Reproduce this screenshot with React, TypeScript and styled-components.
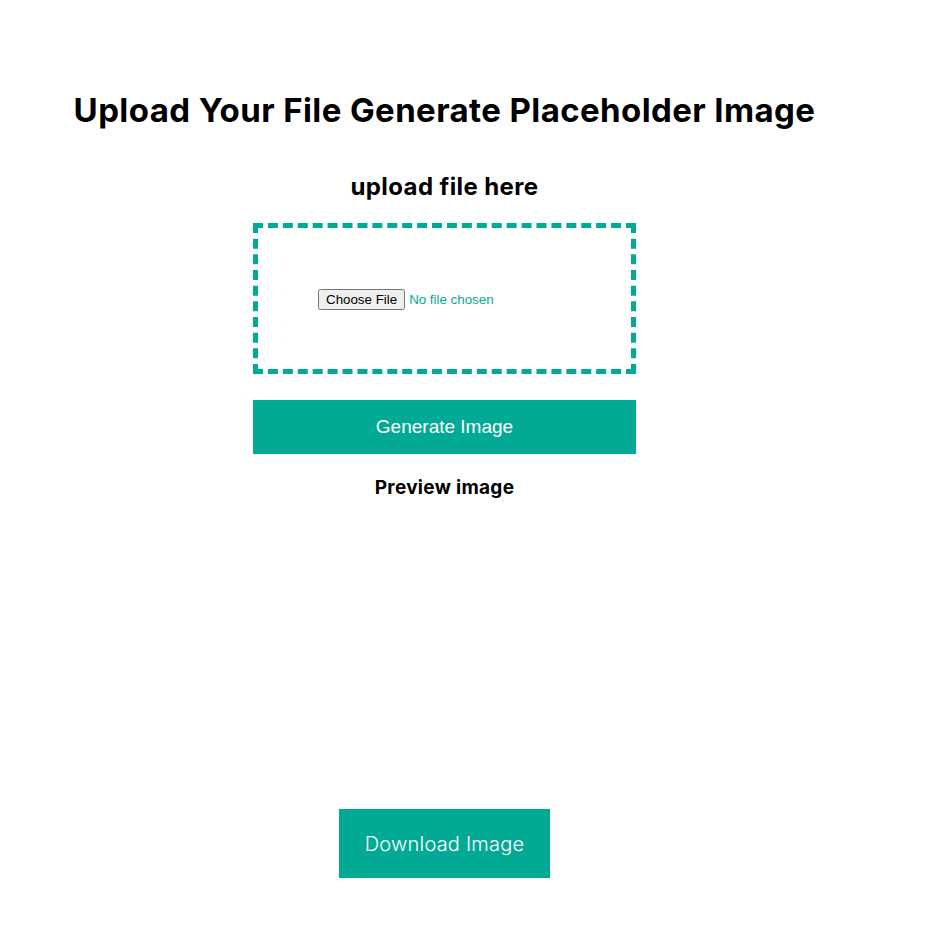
import React from "react";
import styled, { createGlobalStyle } from "styled-components";

const TEAL = "#02aa96";

const GlobalStyle = createGlobalStyle`
	body {
		margin: 0;
		background: #ffffff;
		font-family: Inter, "Liberation Sans", sans-serif;
		color: #000000;
	}
`;

const Page = styled.div`
	width: 889px;
	display: flex;
	flex-direction: column;
	align-items: center;
	padding-top: 88px;
`;

const Title = styled.h1`
	margin: 0;
	font-size: 33px;
	font-weight: 700;
	letter-spacing: 0.4px;
	line-height: 44px;
`;

const SubTitle = styled.h3`
	margin: 38px 0 0;
	font-size: 24px;
	font-weight: 700;
	letter-spacing: 0.4px;
	line-height: 34px;
`;

const DropZone = styled.div`
	margin-top: 19px;
	width: 383px;
	height: 151px;
	box-sizing: border-box;
	border: 5px dashed ${TEAL};
	display: flex;
	align-items: center;
	padding: 2px 0 0 60px;
`;

const FileInput = styled.input`
	color: ${TEAL};
	font-family: "Liberation Sans", Arial, sans-serif;
	font-size: 13.33px;
`;

const GenerateButton = styled.button`
	margin-top: 26px;
	width: 383px;
	height: 54px;
	border: none;
	background: ${TEAL};
	color: #ffffff;
	font-family: "Liberation Sans", Arial, sans-serif;
	font-size: 19px;
	cursor: pointer;
`;

const PreviewLabel = styled.h4`
	margin: 20px 0 0;
	font-size: 19px;
	font-weight: 700;
	letter-spacing: 0.3px;
	line-height: 28px;
`;

const PreviewArea = styled.div`
	width: 383px;
	height: 307px;
`;

const DownloadButton = styled.button`
	width: 211px;
	height: 69px;
	border: none;
	background: ${TEAL};
	color: #ffffff;
	font-family: Inter, "Liberation Sans", sans-serif;
	font-size: 20px;
	font-weight: 300;
	letter-spacing: 0.2px;
	cursor: pointer;
`;

export default function App() {
	return (
		<>
			<GlobalStyle />
			<Page>
				<Title>Upload Your File Generate Placeholder Image</Title>
				<SubTitle>upload file here</SubTitle>
				<DropZone>
					<FileInput type="file" />
				</DropZone>
				<GenerateButton>Generate Image</GenerateButton>
				<PreviewLabel>Preview image</PreviewLabel>
				<PreviewArea />
				<DownloadButton>Download Image</DownloadButton>
			</Page>
		</>
	);
}
